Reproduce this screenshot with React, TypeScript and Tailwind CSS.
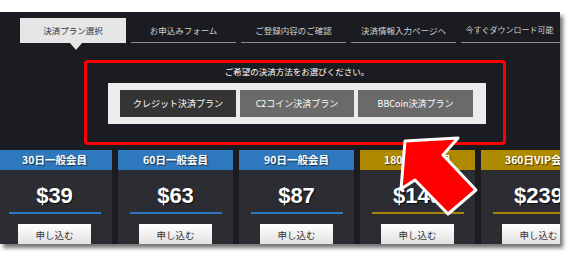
const tabs = ["決済プラン選択", "お申込みフォーム", "ご登録内容のご確認", "決済情報入力ページへ", "今すぐダウンロード可能"];

const plans = [
  { name: "30日一般会員", price: "$39", gold: false },
  { name: "60日一般会員", price: "$63", gold: false },
  { name: "90日一般会員", price: "$87", gold: false },
  { name: "180日VIP会員", price: "$149", gold: true },
  { name: "360日VIP会員", price: "$239", gold: true },
];

export default function App() {
  return (
    <div
      className="relative w-[573px] h-[266px] bg-white overflow-hidden"
      style={{ fontFamily: '"Noto Sans CJK JP", "Noto Sans", sans-serif' }}
    >
      <div className="mt-[12px] w-[560px] h-[232px] bg-[#1b1c21] shadow-[3px_4px_4px_rgba(0,0,0,0.55)] overflow-hidden flex flex-col">
        {/* Steps */}
        <div className="flex gap-[5px] pl-[20px] pt-[6px]">
          {tabs.map((t, i) =>
            i === 0 ? (
              <div key={i} className="relative w-[106px] h-[25px] bg-[#e6e6e6] flex items-center justify-center text-[8.5px] text-[#333] shrink-0">
                {t}
                <div className="absolute left-[50px] top-[25px] w-0 h-0 border-l-[6px] border-r-[6px] border-t-[7px] border-l-transparent border-r-transparent border-t-[#e6e6e6]" />
              </div>
            ) : (
              <div key={i} className="w-[105px] h-[25px] border-b border-[#8a8a8a] flex items-center justify-center text-[8.5px] text-[#d0d0d0] shrink-0 whitespace-nowrap">
                {i === 4 ? <span className="text-[8px] pr-[8px]">{t}</span> : t}
              </div>
            )
          )}
        </div>

        {/* Payment method */}
        <div className="ml-[84px] mt-[17px] w-[422px] h-[85px] border-[3px] border-[#ff0000] rounded-[4px] flex flex-col items-center">
          <p className="text-[8.5px] text-white mt-[1px] leading-[14px] pl-[4px]">ご希望の決済方法をお選びください。</p>
          <div className="mt-[5px] ml-[4px] w-[378px] h-[41px] bg-[#ececec] flex items-center gap-[4px] px-[12px]">
            <div className="w-[116px] h-[27px] bg-[#343434] text-[9px] text-white flex items-center justify-center">クレジット決済プラン</div>
            <div className="w-[114px] h-[27px] bg-[#6a6a6a] text-[9px] text-white flex items-center justify-center">C2コイン決済プラン</div>
            <div className="w-[115px] h-[27px] bg-[#6a6a6a] text-[9px] text-white flex items-center justify-center">BBCoin決済プラン</div>
          </div>
        </div>

        {/* Plans */}
        <div className="flex gap-[6px] ml-[-3px] mt-[5px]">
          {plans.map((p) => (
            <div key={p.name} className="w-[115px] h-[94px] bg-[#2c2d33] shrink-0 flex flex-col items-center">
              <div className={`w-full h-[26px] flex items-center justify-center text-[10.5px] font-bold text-white [text-shadow:1px_1px_1px_rgba(0,0,0,0.6)] ${p.gold ? "bg-[#ad8a00]" : "bg-[#2f78bd]"}`}>
                {p.name}
              </div>
              <div className="mt-[13px] h-[24px] flex items-center text-[22px] font-bold text-white [text-shadow:1px_1px_1px_rgba(0,0,0,0.8)]" style={{ fontFamily: '"Liberation Sans", Arial, sans-serif' }}>
                {p.price}
              </div>
              <div className={`mt-[5px] w-[92px] h-[2px] ${p.gold ? "bg-[#a8850a]" : "bg-[#2f78bd]"}`} />
              <div className="mt-[10px] w-[73px] h-[20px] shrink-0 bg-gradient-to-b from-white to-[#e2e2e2] text-[9.5px] text-[#333] flex justify-center pt-[4px]">
                申し込む
              </div>
            </div>
          ))}
        </div>
      </div>

      {/* Arrow */}
      <svg className="absolute left-0 top-0" width="573" height="266" viewBox="0 0 573 266">
        <polygon
          points="405,141 458,138 443,155 476,190 448,214 415,180 401,189"
          fill="#ff0000"
          stroke="#ffffff"
          strokeWidth="3"
          strokeLinejoin="round"
        />
      </svg>
    </div>
  );
}
